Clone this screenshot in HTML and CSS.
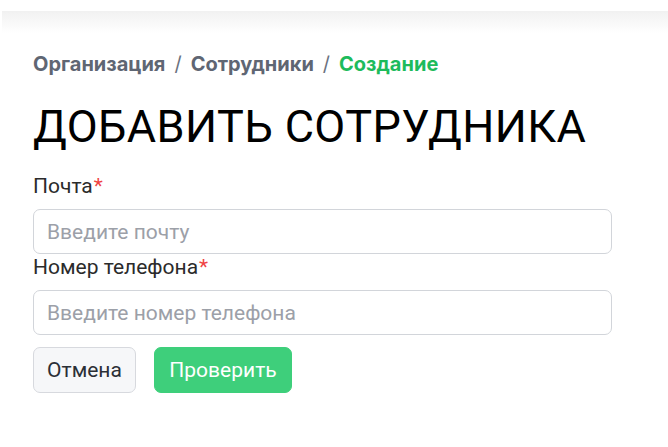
FILE: index.html
```html
<!DOCTYPE html>
<html lang="ru">
<head>
<meta charset="utf-8">
<title>Добавить сотрудника</title>
<link rel="stylesheet" href="styles.css">
</head>
<body>
<header class="topbar"></header>
<main class="page">
  <nav class="crumbs">
    <span class="crumb">Организация</span>
    <span class="sep">/</span>
    <span class="crumb">Сотрудники</span>
    <span class="sep">/</span>
    <span class="crumb current">Создание</span>
  </nav>
  <h1 class="title">ДОБАВИТЬ СОТРУДНИКА</h1>
  <form class="form">
    <label class="field">
      <span class="label">Почта<span class="req">*</span></span>
      <input class="input" type="text" placeholder="Введите почту">
    </label>
    <label class="field">
      <span class="label">Номер телефона<span class="req">*</span></span>
      <input class="input" type="text" placeholder="Введите номер телефона">
    </label>
    <div class="actions">
      <button type="button" class="btn btn-secondary">Отмена</button>
      <button type="button" class="btn btn-primary">Проверить</button>
    </div>
  </form>
</main>
</body>
</html>
```
FILE: styles.css
```css
* { box-sizing: border-box; }
html, body { margin: 0; padding: 0; background: #fff; }
body { font-family: Roboto, "Liberation Sans", sans-serif; color: #1f2328; }

.topbar {
  margin: 11px 0 0 2px;
  height: 22px;
  background: linear-gradient(#f1f1f1, #ffffff);
}

.page {
  padding: 19px 56px 0 33px;
}

.crumbs {
  display: flex;
  gap: 9px;
  font-family: Inter, "Noto Sans", sans-serif;
  font-weight: 700;
  font-size: 20px;
  line-height: 24px;
  color: #5f6673;
}
.crumb.current { color: #1dbb5c; }
.sep { font-weight: 400; color: #6b7280; }

.title {
  margin: 27px 0 0;
  font-weight: 400;
  font-size: 45px;
  line-height: 47px;
  letter-spacing: 0.4px;
  color: #000;
}

.form { display: flex; flex-direction: column; margin-top: 24px; }
.field { display: flex; flex-direction: column; }
.label {
  font-size: 21px;
  line-height: 24px;
  color: #2b2b2b;
  margin-bottom: 11px;
}
.req { color: #ef4444; margin-left: 1px; }

.input {
  height: 45px;
  width: 100%;
  border: 1px solid #d2d5da;
  border-radius: 7px;
  padding: 0 13px;
  font-family: Roboto, "Liberation Sans", sans-serif;
  font-size: 21px;
  color: #222;
  background: #fff;
  margin-bottom: 1px;
}
.input::placeholder { color: #9ca0a8; }

.actions { display: flex; gap: 18px; margin-top: 11px; }
.btn {
  height: 46px;
  border-radius: 7px;
  font-family: Roboto, "Liberation Sans", sans-serif;
  font-size: 21px;
  padding: 0;
  cursor: pointer;
}
.btn-secondary {
  width: 103px;
  background: #f6f7f9;
  border: 1px solid #d7d9de;
  color: #2b2f36;
}
.btn-primary {
  width: 138px;
  background: #3ecf7b;
  border: 1px solid #3ecf7b;
  color: #fff;
}
```
